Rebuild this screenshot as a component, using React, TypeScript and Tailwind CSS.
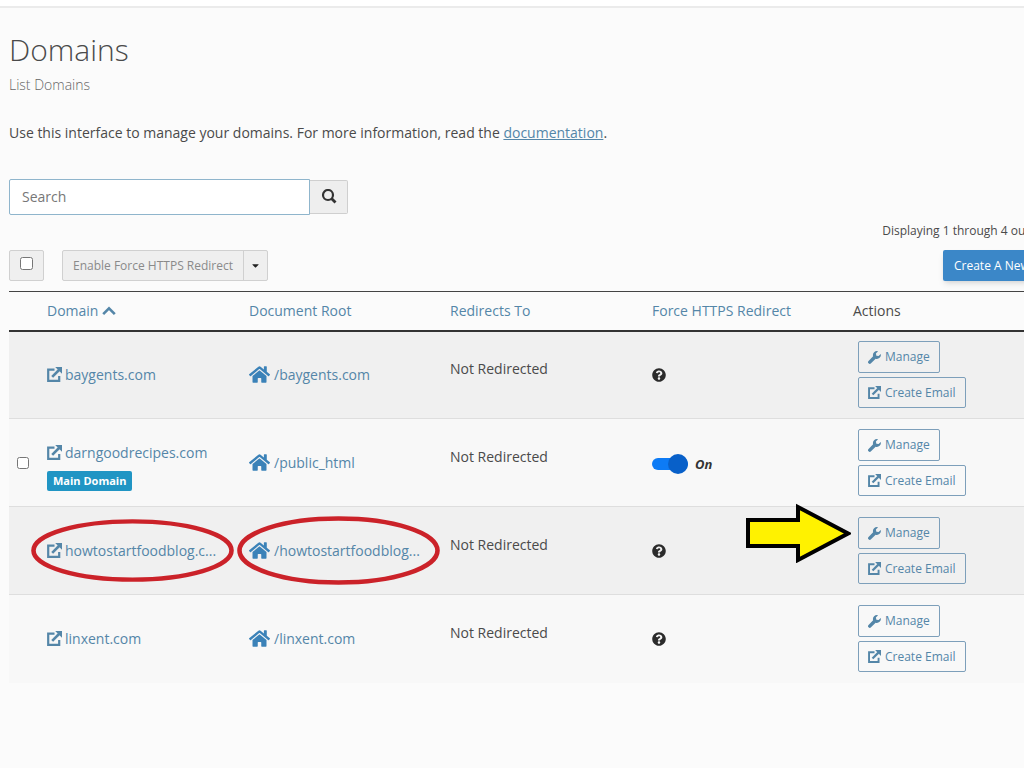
import React from "react";
import { FaHome, FaQuestionCircle, FaCaretDown } from "react-icons/fa";

type Domain = {
  name: string;
  root: string;
  main?: boolean;
  marked?: boolean;
};

const domains: Domain[] = [
  { name: "baygents.com", root: "/baygents.com" },
  { name: "darngoodrecipes.com", root: "/public_html", main: true },
  { name: "howtostartfoodblog.c...", root: "/howtostartfoodblog...", marked: true },
  { name: "linxent.com", root: "/linxent.com" },
];

const ExternalLinkIcon = ({ className }: { className: string }) => (
  <svg viewBox="0 0 15 15" className={className} fill="none" stroke="currentColor" aria-hidden="true">
    <path d="M7.5 2.6H1.2V13.8H12.2V9" strokeWidth="2.2" />
    <path d="M5.2 9.8L12 3" strokeWidth="2.6" />
    <path d="M8.2 0H15V6.8Z" fill="currentColor" stroke="none" />
  </svg>
);

const WrenchIcon = () => (
  <svg viewBox="0 0 16 16" className="size-[13px]" fill="currentColor" aria-hidden="true">
    <path d="M15.7 3.6 13 6.3 10.3 5.7 9.7 3 12.4.3A5 5 0 0 0 6.3 6.6L.7 12.2A2 2 0 0 0 3.7 15.2L9.4 9.6A5 5 0 0 0 15.7 3.6Z" />
  </svg>
);

const SearchIcon = () => (
  <svg viewBox="0 0 16 16" className="size-4" fill="none" stroke="#333" aria-hidden="true">
    <circle cx="7" cy="6" r="5" strokeWidth="2.2" />
    <path d="M10.5 9.5 14.5 13.5" strokeWidth="2.8" />
  </svg>
);

const SortIcon = () => (
  <svg viewBox="0 0 14 10" className="h-[10px] w-[14px]" fill="none" stroke="currentColor" aria-hidden="true">
    <path d="M1.2 8.2 7 2.4 12.8 8.2" strokeWidth="2.6" />
  </svg>
);

const Ring = ({ className }: { className: string }) => (
  <svg viewBox="0 0 204 68" preserveAspectRatio="none" className={className} aria-hidden="true">
    <ellipse cx="102" cy="34" rx="99.5" ry="31.5" fill="none" stroke="#cb2229" strokeWidth="4.6" />
  </svg>
);

const Arrow = () => (
  <svg viewBox="0 0 106 60" className="absolute -top-[15px] right-full mr-2 h-[60px] w-[106px]" aria-hidden="true">
    <path d="M3 17H53V4L103 30.5L53 57V43H3Z" fill="#fff200" stroke="#000" strokeWidth="4" />
  </svg>
);

const actionClass =
  "relative flex items-center gap-1 rounded-xs border border-[#7d9fba] px-[9px] text-[12px] leading-[18px] text-[#5486a8]";

const DomainRow = ({ domain }: { domain: Domain }) => (
  <tr className="h-[88px] border-b border-[#dedede] odd:bg-[#f0f0f0] even:bg-[#f8f8f8] last:border-b-0">
    <td className="px-2">
      {domain.main && <input type="checkbox" aria-label={`Select ${domain.name}`} className="block size-3" />}
    </td>
    <td className="px-2">
      <a href="#" className="relative flex w-fit items-center gap-[3px] text-[#5486a8]">
        <ExternalLinkIcon className="size-[15px]" />
        <span>{domain.name}</span>
        {domain.marked && <Ring className="absolute -left-4 -top-[22px] h-[63px] w-[203px]" />}
      </a>
      {domain.main && (
        <div className="mt-2 -mb-2 w-fit rounded-xs bg-[#2095c4] px-[6px] text-[11px] leading-5 font-bold text-white">
          Main Domain
        </div>
      )}
    </td>
    <td className="px-2">
      <a href="#" className="relative flex w-fit items-center gap-1 text-[#5486a8]">
        <FaHome size={21} color="#3b82b8" />
        <span>{domain.root}</span>
        {domain.marked && <Ring className="absolute -left-3 -top-6 h-[69px] w-[203px]" />}
      </a>
    </td>
    <td className="px-2 pb-3">Not Redirected</td>
    <td className="px-2">
      {domain.main ? (
        <label className="flex items-center gap-[7px] pt-[2px] text-[13px] font-bold italic text-[#333]">
          <input type="checkbox" role="switch" defaultChecked className="peer sr-only" />
          <span className="flex h-3 w-9 items-center justify-end rounded-full bg-[#0d7bf5]">
            <span className="size-5 rounded-full bg-[#0860c9]" />
          </span>
          On
        </label>
      ) : (
        <button type="button" aria-label="Why is this unavailable?" className="block">
          <FaQuestionCircle size={14} color="#2b2b2b" />
        </button>
      )}
    </td>
    <td className="px-2">
      <div className="ml-[5px] flex flex-col items-start gap-1">
        <button type="button" className={`${actionClass} h-8`}>
          <WrenchIcon />
          Manage
          {domain.marked && <Arrow />}
        </button>
        <button type="button" className={`${actionClass} h-[31px]`}>
          <ExternalLinkIcon className="size-[13px]" />
          Create Email
        </button>
      </div>
    </td>
  </tr>
);

const App: React.FC = () => {
  return (
    <div className="min-h-screen overflow-hidden bg-[#fbfbfb] font-['Open_Sans','Noto_Sans',sans-serif] text-[14px] leading-5 text-[#4a4a4a]">
      <div className="h-2 border-b-2 border-[#ebebeb] bg-white" />
      <main className="-mr-16 pl-[9px] pt-[22px]">
        <h1 className="text-[30px] leading-10 font-light">Domains</h1>
        <h2 className="mt-[5px] font-light text-[#666]">List Domains</h2>
        <p className="mt-7">
          Use this interface to manage your domains. For more information, read the{" "}
          <a href="#" className="text-[#5486a8] underline">
            documentation
          </a>
          .
        </p>

        <form className="mt-9 flex items-center">
          <input
            type="text"
            placeholder="Search"
            aria-label="Search"
            className="h-9 w-[301px] rounded-l-xs border border-[#8fb5cc] bg-white px-3 pb-[2px] placeholder:text-[#777]"
          />
          <button
            type="button"
            aria-label="Search"
            className="flex h-[34px] w-[38px] items-center justify-center rounded-r-xs border border-l-0 border-[#cfcfcf] bg-[#eee]"
          >
            <SearchIcon />
          </button>
        </form>

        <div className="mt-[6px] flex justify-end text-[12px]">
          <span className="whitespace-nowrap">Displaying 1 through 4 out of 4 items</span>
        </div>

        <div className="mt-[9px] flex items-center">
          <label className="flex h-[31px] w-[35px] items-center justify-center rounded-xs border border-[#d0d0d0] bg-[#efefef] pb-[5px]">
            <input type="checkbox" aria-label="Select all domains" className="size-[13px]" />
          </label>
          <div className="ml-[18px] flex h-[31px] rounded-xs border border-[#d0d0d0] bg-[#efefef] text-[12px] text-[#8a8a8a]">
            <button type="button" className="px-[10px]">
              Enable Force HTTPS Redirect
            </button>
            <button type="button" aria-label="More actions" className="border-l border-[#d0d0d0] px-[6px]">
              <FaCaretDown size={11} color="#222" />
            </button>
          </div>
          <button
            type="button"
            className="ml-auto h-[31px] rounded-xs bg-[#3b87c8] px-[11px] text-[12px] whitespace-nowrap text-white shadow-md"
          >
            Create A New Domain
          </button>
        </div>

        <table className="mt-[10px] w-full table-fixed border-collapse text-left">
          <thead>
            <tr className="h-[39px] border-t border-b-2 border-t-[#444] border-b-[#333] text-[#5486a8]">
              <th className="w-[30px]" />
              <th className="w-[202px] px-2 font-normal">
                <a href="#" className="inline-flex items-center gap-1">
                  Domain
                  <SortIcon />
                </a>
              </th>
              <th className="w-[201px] px-2 font-normal">
                <a href="#">Document Root</a>
              </th>
              <th className="w-[202px] px-2 font-normal">
                <a href="#">Redirects To</a>
              </th>
              <th className="w-[201px] px-2 font-normal">
                <a href="#">Force HTTPS Redirect</a>
              </th>
              <th className="px-2 font-normal text-[#4a4a4a]">Actions</th>
            </tr>
          </thead>
          <tbody>
            {domains.map((domain) => (
              <DomainRow key={domain.name} domain={domain} />
            ))}
          </tbody>
        </table>
      </main>
    </div>
  );
};

export default App;
